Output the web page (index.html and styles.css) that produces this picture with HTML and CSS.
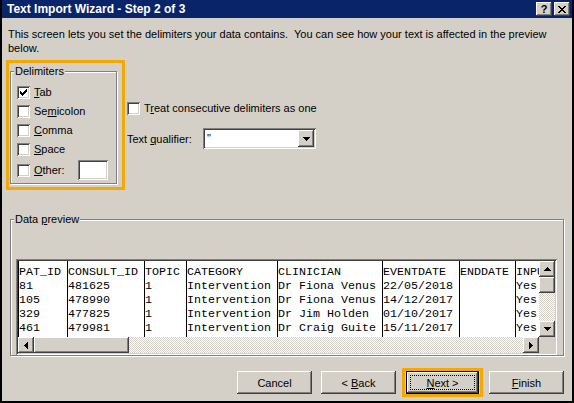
FILE: index.html
```html
<!DOCTYPE html>
<html lang="en">
<head>
<meta charset="utf-8">
<title>Text Import Wizard - Step 2 of 3</title>
<link rel="stylesheet" href="styles.css">
</head>
<body>
<div class="window">
  <div class="titlebar">
    <span class="title">Text Import Wizard - Step 2 of 3</span>
    <div class="tbtns">
      <span class="tbtn help">?</span>
      <span class="tbtn">
        <svg width="8" height="7" viewBox="0 0 8 7"><path fill="#000" d="M0 0h2v1H0z M6 0h2v1H6z M1 1h2v1H1z M5 1h2v1H5z M2 2h4v1H2z M3 3h2v1H3z M2 4h4v1H2z M1 5h2v1H1z M5 5h2v1H5z M0 6h2v1H0z M6 6h2v1H6z"/></svg>
      </span>
    </div>
  </div>

  <p class="intro">This screen lets you set the delimiters your data contains.&nbsp; You can see how your text is affected in the preview<br>below.</p>

  <div class="top-row">
    <div class="hl hl-delims">
      <div class="group delims">
        <div class="group-title">Delimiters</div>
        <div class="rows">
          <div class="chk-row">
            <span class="chk"><svg width="7" height="7" viewBox="0 0 7 7"><path fill="#000" d="M0 2h1v3H0z M1 3h1v3H1z M2 4h1v3H2z M3 3h1v3H3z M4 2h1v3H4z M5 1h1v3H5z M6 0h1v3H6z"/></svg></span>
            <span class="lbl"><u>T</u>ab</span>
          </div>
          <div class="chk-row">
            <span class="chk"></span>
            <span class="lbl">Se<u>m</u>icolon</span>
          </div>
          <div class="chk-row">
            <span class="chk"></span>
            <span class="lbl"><u>C</u>omma</span>
          </div>
          <div class="chk-row">
            <span class="chk"></span>
            <span class="lbl"><u>S</u>pace</span>
          </div>
          <div class="chk-row other">
            <span class="chk"></span>
            <span class="lbl other-lbl"><u>O</u>ther:</span>
            <span class="field other-field"></span>
          </div>
        </div>
      </div>
    </div>

    <div class="options">
      <div class="chk-row consec">
        <span class="chk"></span>
        <span class="lbl">T<u>r</u>eat consecutive delimiters as one</span>
      </div>
      <div class="qual-row">
        <span class="qual-lbl">Text <u>q</u>ualifier:</span>
        <div class="combo">
          <span class="combo-val">"</span>
          <span class="combo-btn">
            <svg width="7" height="4" viewBox="0 0 7 4"><path fill="#000" d="M0 0h7v1H0z M1 1h5v1H1z M2 2h3v1H2z M3 3h1v1H3z"/></svg>
          </span>
        </div>
      </div>
    </div>
  </div>

  <div class="group preview">
    <div class="group-title">Data <u>p</u>review</div>
    <div class="field preview-box">
      <div class="preview-main">
        <div class="table">
          <div class="col w1"><div>PAT_ID</div><div>81</div><div>105</div><div>329</div><div>461</div></div>
          <div class="col w2"><div>CONSULT_ID</div><div>481625</div><div>478990</div><div>477825</div><div>479981</div></div>
          <div class="col w3"><div>TOPIC</div><div>1</div><div>1</div><div>1</div><div>1</div></div>
          <div class="col w4"><div>CATEGORY</div><div>Intervention</div><div>Intervention</div><div>Intervention</div><div>Intervention</div></div>
          <div class="col w5"><div>CLINICIAN</div><div>Dr Fiona Venus</div><div>Dr Fiona Venus</div><div>Dr Jim Holden</div><div>Dr Craig Guite</div></div>
          <div class="col w6"><div>EVENTDATE</div><div>22/05/2018</div><div>14/12/2017</div><div>01/10/2017</div><div>15/11/2017</div></div>
          <div class="col w7"><div>ENDDATE</div><div></div><div></div><div></div><div></div></div>
          <div class="col w8"><div>INPUT</div><div>Yes</div><div>Yes</div><div>Yes</div><div>Yes</div></div>
        </div>
        <div class="vscroll">
          <span class="sbtn"><svg width="7" height="4" viewBox="0 0 7 4"><path fill="#000" d="M3 0h1v1H3z M2 1h3v1H2z M1 2h5v1H1z M0 3h7v1H0z"/></svg></span>
          <span class="sbtn vthumb"></span>
          <span class="track"></span>
          <span class="sbtn"><svg width="7" height="4" viewBox="0 0 7 4"><path fill="#000" d="M0 0h7v1H0z M1 1h5v1H1z M2 2h3v1H2z M3 3h1v1H3z"/></svg></span>
        </div>
      </div>
      <div class="hscroll-row">
        <div class="hscroll">
          <span class="sbtn"><svg width="4" height="7" viewBox="0 0 4 7"><path fill="#000" d="M3 0h1v7H3z M2 1h1v5H2z M1 2h1v3H1z M0 3h1v1H0z"/></svg></span>
          <span class="sbtn hthumb"></span>
          <span class="track"></span>
          <span class="sbtn"><svg width="4" height="7" viewBox="0 0 4 7"><path fill="#000" d="M0 0h1v7H0z M1 1h1v5H1z M2 2h1v3H2z M3 3h1v1H3z"/></svg></span>
        </div>
        <span class="corner"></span>
      </div>
    </div>
  </div>

  <div class="buttons">
    <button class="btn"><span>Cancel</span></button>
    <button class="btn"><span>&lt; <u>B</u>ack</span></button>
    <div class="hl hl-next">
      <button class="btn default"><span class="focus"><span><u>N</u>ext &gt;</span></span></button>
    </div>
    <button class="btn"><span><u>F</u>inish</span></button>
  </div>
</div>
</body>
</html>
```

FILE: styles.css
```css
* { box-sizing: border-box; }
html, body { margin: 0; padding: 0; }
body {
  width: 574px;
  height: 403px;
  overflow: hidden;
  background: #000;
  font-family: "Liberation Sans", Arial, sans-serif;
  font-size: 11px;
  color: #000;
}
u { text-decoration: underline; text-underline-offset: 1px; }

.window {
  width: 574px;
  height: 403px;
  background: #d4d0c8;
  border: 2px solid #000;
  border-top: 0;
  display: flex;
  flex-direction: column;
}

/* title bar */
.titlebar {
  height: 18px;
  flex: none;
  background: #0a246a;
  display: flex;
  align-items: center;
  justify-content: space-between;
  padding: 0 2px 0 5px;
}
.title { color: #fff; font-weight: bold; font-size: 12px; line-height: 14px; }
.tbtns { display: flex; gap: 2px; }
.tbtn {
  width: 16px;
  height: 14px;
  background: #d4d0c8;
  box-shadow: inset -1px -1px #404040, inset 1px 1px #fff, inset -2px -2px #808080, inset 2px 2px #d4d0c8;
  display: flex;
  align-items: center;
  justify-content: center;
}
.tbtn svg { display: block; }
.help { font-weight: bold; font-size: 11px; line-height: 12px; }

/* intro */
.intro { margin: 9px 0 0 6px; line-height: 14px; }

/* generic widgets */
.hl { border: 3px solid #f5a800; }
.field {
  background: #fff;
  box-shadow: inset 1px 1px #808080, inset -1px -1px #fff, inset 2px 2px #404040, inset -2px -2px #d4d0c8;
}
.chk {
  flex: none;
  width: 13px;
  height: 13px;
  background: #fff;
  box-shadow: inset 1px 1px #808080, inset -1px -1px #fff, inset 2px 2px #404040, inset -2px -2px #d4d0c8;
  display: flex;
  align-items: center;
  justify-content: center;
}
.chk svg { display: block; }
.chk-row { display: flex; align-items: center; }
.lbl { margin-left: 4px; line-height: 13px; }

.group {
  border: 1px solid #808080;
  box-shadow: inset 1px 1px #fff, 1px 1px #fff;
  display: flex;
  flex-direction: column;
}
.group-title {
  align-self: flex-start;
  margin: -7px 0 0 3px;
  padding: 0 1px;
  line-height: 13px;
  background: #d4d0c8;
}

/* top row */
.top-row { display: flex; margin: 5px 0 0 4px; }
.hl-delims { width: 119px; height: 130px; padding: 8px 0 0 1px; }
.delims { width: 107px; height: 113px; }
.rows { margin-top: 5px; padding-left: 6px; }
.rows .chk-row { height: 19px; }
.rows .chk-row.other { height: 22px; }
.other-lbl { width: 44px; }
.other-field { width: 30px; height: 20px; }

.options { margin-left: 2px; padding-top: 42px; }
.consec { height: 13px; }
.qual-row { display: flex; align-items: center; margin-top: 13px; height: 21px; }
.qual-lbl { width: 76px; }
.combo {
  width: 113px;
  height: 21px;
  padding: 2px;
  display: flex;
  align-items: center;
  background: #fff;
  box-shadow: inset 1px 1px #808080, inset -1px -1px #fff, inset 2px 2px #404040, inset -2px -2px #d4d0c8;
}
.combo-val { flex: 1; padding-left: 2px; line-height: 17px; }
.combo-btn {
  width: 16px;
  height: 17px;
  background: #d4d0c8;
  box-shadow: inset -1px -1px #404040, inset 1px 1px #fff, inset -2px -2px #808080, inset 2px 2px #d4d0c8;
  display: flex;
  align-items: center;
  justify-content: center;
}
.combo-btn svg, .sbtn svg { display: block; }

/* preview */
.preview { margin: 29px 0 0 8px; width: 554px; }
.preview-box {
  margin: 33px 0 0 5px;
  width: 541px;
  height: 96px;
  padding: 2px;
  display: flex;
  flex-direction: column;
}
.preview-main { display: flex; height: 76px; }
.table {
  flex: 1;
  display: flex;
  overflow: hidden;
  background: #fff;
  font-family: "Liberation Mono", "Courier New", monospace;
  font-size: 11.67px;
  line-height: 14px;
  white-space: pre;
}
.col { flex: none; border-left: 1px solid #000; padding-top: 4px; overflow: hidden; }
.w1 { width: 49px; }
.w2 { width: 77px; }
.w3 { width: 42px; }
.w4 { width: 91px; }
.w5 { width: 105px; }
.w6 { width: 77px; }
.w7 { width: 56px; }
.w8 { width: 60px; }

.sbtn {
  flex: none;
  width: 16px;
  height: 16px;
  background: #d4d0c8;
  box-shadow: inset -1px -1px #404040, inset 1px 1px #fff, inset -2px -2px #808080, inset 2px 2px #d4d0c8;
  display: flex;
  align-items: center;
  justify-content: center;
}
.track {
  flex: 1;
  background: repeating-conic-gradient(#fff 0 25%, #d4d0c8 0 50%) 0 0 / 2px 2px;
}
.vscroll { width: 16px; display: flex; flex-direction: column; }
.hscroll-row { display: flex; height: 16px; }
.hscroll { flex: 1; display: flex; }
.hthumb { width: 95px; }
.corner { width: 16px; height: 16px; background: #d4d0c8; }

/* buttons */
.buttons {
  display: flex;
  align-items: center;
  justify-content: flex-end;
  margin-top: 12px;
  padding-right: 8px;
  height: 29px;
}
.btn {
  width: 75px;
  height: 23px;
  margin: 0;
  padding: 0;
  border: 0;
  background: #d4d0c8;
  font-family: "Liberation Sans", Arial, sans-serif;
  font-size: 11px;
  color: #000;
  box-shadow: inset -1px -1px #404040, inset 1px 1px #fff, inset -2px -2px #808080, inset 2px 2px #d4d0c8;
  display: flex;
  align-items: center;
  justify-content: center;
}
.btn + .btn { margin-left: 9px; }
.hl-next { margin: 0 6px; padding: 0 1px; }
.btn.default {
  width: 73px;
  box-shadow: inset 0 0 0 1px #000, inset -2px -2px #404040, inset 2px 2px #fff, inset -3px -3px #808080;
}
.focus {
  width: 65px;
  height: 15px;
  border: 1px dotted #000;
  display: flex;
  align-items: center;
  justify-content: center;
}
```
